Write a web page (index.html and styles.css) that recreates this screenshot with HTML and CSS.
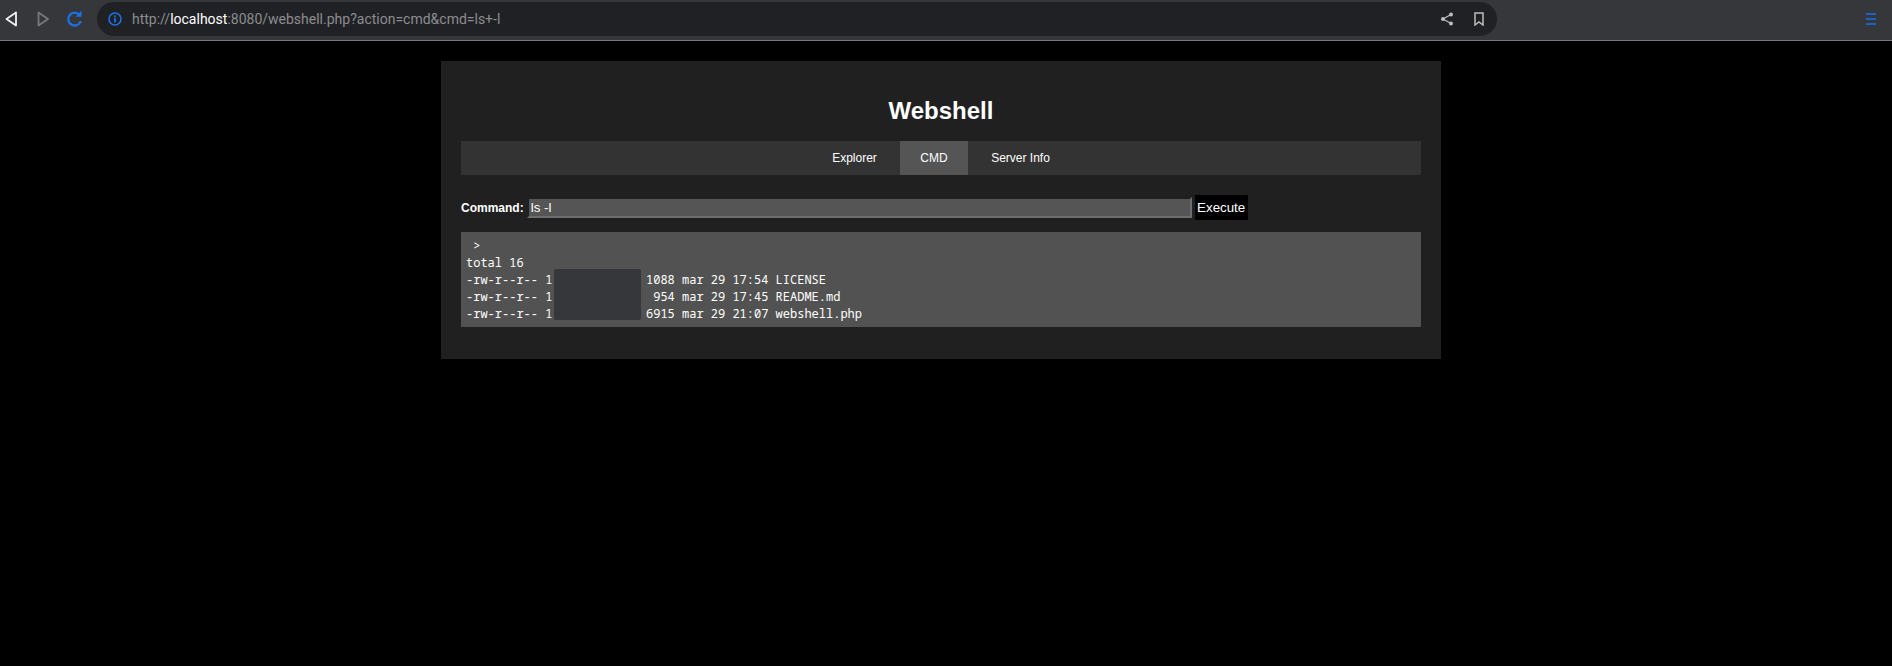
FILE: index.html
```html
<!DOCTYPE html>
<html lang="en">
<head>
<meta charset="utf-8">
<title>Webshell</title>
<link rel="stylesheet" href="styles.css">
</head>
<body>
<header class="toolbar">
  <div class="nav-buttons">
    <svg class="icon" width="16" height="18" viewBox="0 0 16 18"><path d="M12 2.5 L2.5 9 L12 15.5 Z" fill="none" stroke="#f1f1f1" stroke-width="1.8" stroke-linejoin="round"/></svg>
    <svg class="icon" width="16" height="18" viewBox="0 0 16 18"><path d="M3.5 2.5 L13 9 L3.5 15.5 Z" fill="none" stroke="#77787b" stroke-width="1.8" stroke-linejoin="round"/></svg>
    <svg class="icon" width="16" height="18" viewBox="0 0 16 18"><path d="M13.6 5 A6.4 6.4 0 1 0 14.8 11" fill="none" stroke="#1b72e8" stroke-width="2.3"/><path d="M9.5 6.8 H15.5 V0.8 Z" fill="#1b72e8"/></svg>
  </div>
  <div class="urlbar">
    <svg class="info" width="14" height="14" viewBox="0 0 14 14"><circle cx="7" cy="7" r="6" fill="none" stroke="#1b72e8" stroke-width="1.6"/><rect x="6.1" y="6" width="1.8" height="4.4" fill="#1b72e8"/><rect x="6.1" y="3.4" width="1.8" height="1.7" fill="#1b72e8"/></svg>
    <div class="url">http://<span class="host">localhost</span>:8080/webshell.php?action=cmd&amp;cmd=ls+-l</div>
    <svg class="share" width="14" height="14" viewBox="0 0 14 14"><path d="M11 2.5 L3 7 L11 11.5" fill="none" stroke="#bdbdbd" stroke-width="1.2"/><circle cx="11" cy="2.5" r="2" fill="#bdbdbd"/><circle cx="3" cy="7" r="2" fill="#bdbdbd"/><circle cx="11" cy="11.5" r="2" fill="#bdbdbd"/></svg>
    <svg class="bookmark" width="10" height="14" viewBox="0 0 10 14"><path d="M1 1 H9 V13 L5 10 L1 13 Z" fill="none" stroke="#bdbdbd" stroke-width="1.5"/></svg>
  </div>
  <div class="spacer"></div>
  <div class="menu"><span></span><span></span><span></span></div>
</header>
<main class="page">
  <section class="panel">
    <h1 class="title">Webshell</h1>
    <nav class="tabs">
      <a class="tab">Explorer</a>
      <a class="tab tab-active">CMD</a>
      <a class="tab">Server Info</a>
    </nav>
    <form class="cmd-form">
      <label class="cmd-label">Command:</label>
      <input class="cmd-input" type="text" value="ls -l">
      <button class="cmd-button" type="button">Execute</button>
    </form>
    <div class="output">
      <pre class="output-text"> &gt;
total 16
-rw-r--r-- 1             1088 mar 29 17:54 LICENSE
-rw-r--r-- 1              954 mar 29 17:45 README.md
-rw-r--r-- 1             6915 mar 29 21:07 webshell.php</pre>
      <div class="redaction"></div>
    </div>
  </section>
</main>
</body>
</html>
```
FILE: styles.css
```css
* { box-sizing: border-box; }
html, body { margin: 0; height: 100%; }
body {
  background: #000;
  color: #fff;
  font-family: "Liberation Sans", Arial, sans-serif;
  overflow: hidden;
}
.toolbar {
  display: flex;
  align-items: center;
  height: 41px;
  padding: 2px 0 5px 4px;
  background: #36373b;
  border-bottom: 1px solid #77787b;
}
.nav-buttons {
  display: flex;
  align-items: center;
  gap: 15px;
  width: 93px;
}
.icon { display: block; flex: none; }
.urlbar {
  display: flex;
  align-items: center;
  width: 1400px;
  height: 34px;
  padding: 0 13px 0 11px;
  border-radius: 17px;
  background: #202124;
}
.info { flex: none; margin-right: 10px; }
.url {
  flex: 1;
  font-family: Roboto, sans-serif;
  font-size: 14px;
  color: #8c8d90;
}
.host { color: #fff; }
.share { flex: none; margin-right: 20px; }
.bookmark { flex: none; }
.spacer { flex: 1; }
.menu {
  display: flex;
  flex-direction: column;
  gap: 3px;
  width: 10px;
  margin-right: 16px;
}
.menu span { display: block; height: 2px; background: #1a62c4; }
.page { padding: 20px 10px 0 0; }
.panel {
  width: 1000px;
  height: 298px;
  margin: 0 auto;
  padding: 20px;
  background: #202020;
}
.title {
  margin: 14px 0 15px;
  font-size: 24px;
  line-height: 31px;
  font-weight: 700;
  text-align: center;
}
.tabs {
  display: flex;
  justify-content: center;
  gap: 3.5px;
  height: 34px;
  background: #333;
}
.tab {
  display: flex;
  align-items: center;
  padding: 0 20px;
  font-size: 12px;
  color: #fff;
}
.tab-active { background: #555; }
.cmd-form {
  display: flex;
  align-items: center;
  margin: 20px 0 12px;
  height: 25px;
}
.cmd-label { font-size: 12px; font-weight: 700; margin-right: 3px; }
.cmd-input {
  width: 665px;
  height: 21px;
  margin: 0 3px 0 0;
  padding: 1px 1px 1px 2px;
  border: 2px solid;
  border-color: #202020 #6e6e6e #6e6e6e #202020;
  background: #555;
  color: #fff;
  font-family: "Liberation Sans", Arial, sans-serif;
  font-size: 13.33px;
  outline: 0;
}
.cmd-button {
  width: 53px;
  height: 25px;
  padding: 0;
  border: 0;
  background: #000;
  color: #fff;
  font-family: "Liberation Sans", Arial, sans-serif;
  font-size: 13.33px;
}
.output {
  position: relative;
  height: 95px;
  padding: 5px;
  background: #525252;
}
.output-text {
  margin: 0;
  font-family: "Noto Sans Mono", "DejaVu Sans Mono", monospace;
  font-size: 12px;
  line-height: 17px;
  color: #fff;
}
.redaction {
  position: absolute;
  left: 93px;
  top: 37px;
  width: 87px;
  height: 51px;
  border-radius: 2px;
  background: #36373b;
}
```
